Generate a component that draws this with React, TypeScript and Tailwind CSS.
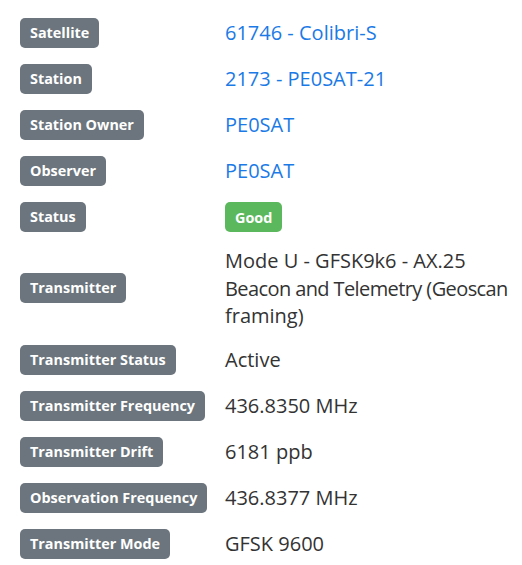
import React from 'react'

type Row = {
  label: string
  value: React.ReactNode
}

function Badge({ children, tone = 'gray' }: { children: React.ReactNode; tone?: 'gray' | 'green' }) {
  return (
    <span
      className={`inline-flex items-center h-[30px] px-[10px] rounded-[5px] text-[14.4px] font-bold text-white whitespace-nowrap ${
        tone === 'green' ? 'bg-[#5cb85c]' : 'bg-[#6c757d]'
      }`}
    >
      {children}
    </span>
  )
}

const link = 'text-[#1b7ae6]'

const rows: Row[] = [
  { label: 'Satellite', value: <a className={link}>61746 - Colibri-S</a> },
  { label: 'Station', value: <a className={link}>2173 - PE0SAT-21</a> },
  { label: 'Station Owner', value: <a className={link}>PE0SAT</a> },
  { label: 'Observer', value: <a className={link}>PE0SAT</a> },
  { label: 'Status', value: <Badge tone="green">Good</Badge> },
  {
    label: 'Transmitter',
    value: (
      <>
        Mode U - GFSK9k6 - AX.25
        <br />
        <span className="tracking-[-0.6px]">Beacon and Telemetry (Geoscan</span>
        <br />
        framing)
      </>
    ),
  },
  { label: 'Transmitter Status', value: 'Active' },
  { label: 'Transmitter Frequency', value: '436.8350 MHz' },
  { label: 'Transmitter Drift', value: '6181 ppb' },
  { label: 'Observation Frequency', value: '436.8377 MHz' },
  { label: 'Transmitter Mode', value: 'GFSK 9600' },
]

export default function App() {
  return (
    <div className="w-[522px] h-[565px] overflow-hidden bg-white pt-[10px] pl-[20px] font-['Open_Sans','Noto_Sans',sans-serif]">
      <dl className="flex flex-col">
        {rows.map((r) => (
          <div key={r.label} className="flex items-center">
            <dt className="w-[205px] shrink-0 py-2">
              <Badge>{r.label}</Badge>
            </dt>
            <dd className="flex-1 py-[7px] text-[20px] leading-[27.5px] text-[#333] whitespace-nowrap">{r.value}</dd>
          </div>
        ))}
      </dl>
    </div>
  )
}
